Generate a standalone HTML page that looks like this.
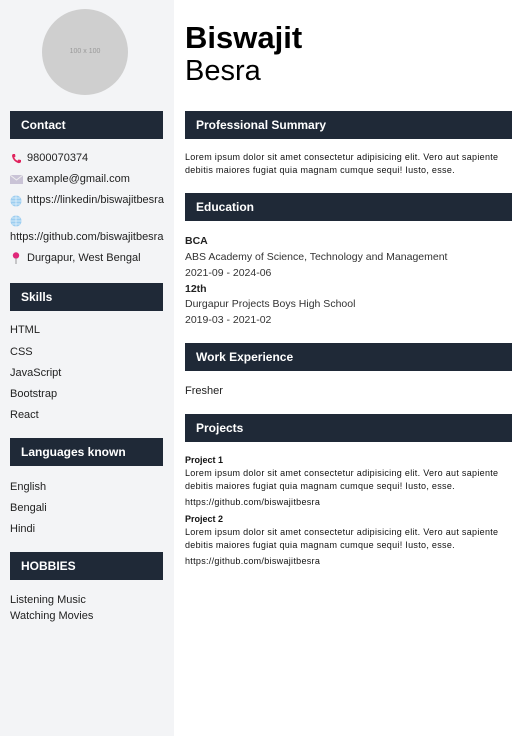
<!DOCTYPE html>
<html><head><meta charset="utf-8"><style>
*{margin:0;padding:0;box-sizing:border-box}
body{width:519px;height:736px;background:#fff;font-family:"Liberation Sans",sans-serif;color:#222;position:relative;overflow:hidden}
.side{position:absolute;left:0;top:0;width:174px;height:736px;background:#f3f4f6}
.t{position:absolute;white-space:nowrap;line-height:1}
.bar{position:absolute;height:28px;background:#1f2937;color:#fff;font-weight:bold;font-size:12px;padding-left:11px;line-height:29px}
.s{font-size:11px;color:#222}
.r{font-size:9px;letter-spacing:0.3px;color:#111}
.e{font-size:10.5px;color:#333}
.ic{position:absolute;font-size:10px;line-height:1}
</style></head><body>
<div class="side"></div>
<div style="position:absolute;left:42px;top:9px;width:86px;height:86px;border-radius:50%;background:#cfcfcf;color:#999;font-size:7px;text-align:center;line-height:86px">100 x 100</div>

<div class="bar" style="left:10px;top:111px;width:153px">Contact</div>
<svg class="ic" style="left:11px;top:153px" width="11" height="11" viewBox="0 0 11 11"><path d="M2 1 L4 1 L4.5 3.5 L3.2 4.5 Q4.5 7 6.5 7.8 L7.5 6.5 L10 7 L10 9 Q9 10.5 7 10 Q2 8 1 3 Q1 1.5 2 1Z" fill="#e0245e"/></svg>
<div class="t s" style="left:27px;top:153px">9800070374</div>
<svg class="ic" style="left:10px;top:175px" width="13" height="9" viewBox="0 0 13 9"><rect width="13" height="9" fill="#c9c3d6"/><path d="M0 0 L6.5 5 L13 0" stroke="#eee" fill="none"/></svg>
<div class="t s" style="left:27px;top:174px">example@gmail.com</div>
<svg class="ic" style="left:10px;top:195px" width="12" height="12" viewBox="0 0 12 12"><circle cx="6" cy="6" r="5.5" fill="#9ccdf0"/><path d="M0.5 6H11.5M6 0.5V11.5M2 3H10M2 9H10" stroke="#e8f4fc" stroke-width="0.7"/></svg>
<div class="t s" style="left:27px;top:195px">https://linkedin/biswajitbesra</div>
<svg class="ic" style="left:10px;top:215px" width="12" height="12" viewBox="0 0 12 12"><circle cx="6" cy="6" r="5.5" fill="#9ccdf0"/><path d="M0.5 6H11.5M6 0.5V11.5M2 3H10M2 9H10" stroke="#e8f4fc" stroke-width="0.7"/></svg>
<div class="t s" style="left:10px;top:232px">https://github.com/biswajitbesra</div>
<svg class="ic" style="left:12px;top:252px" width="8" height="12" viewBox="0 0 8 12"><circle cx="4" cy="3.5" r="3.2" fill="#e0287a"/><path d="M4 6V12" stroke="#999" stroke-width="1"/></svg>
<div class="t s" style="left:27px;top:253px">Durgapur, West Bengal</div>

<div class="bar" style="left:10px;top:283px;width:153px">Skills</div>
<div class="t s" style="left:10px;top:325px">HTML</div>
<div class="t s" style="left:10px;top:347px">CSS</div>
<div class="t s" style="left:10px;top:368px">JavaScript</div>
<div class="t s" style="left:10px;top:389px">Bootstrap</div>
<div class="t s" style="left:10px;top:410px">React</div>

<div class="bar" style="left:10px;top:438px;width:153px">Languages known</div>
<div class="t s" style="left:10px;top:482px">English</div>
<div class="t s" style="left:10px;top:503px">Bengali</div>
<div class="t s" style="left:10px;top:524px">Hindi</div>

<div class="bar" style="left:10px;top:552px;width:153px">HOBBIES</div>
<div class="t s" style="left:10px;top:595px">Listening Music</div>
<div class="t s" style="left:10px;top:611px">Watching Movies</div>

<div class="t" style="left:185px;top:22px;font-size:31px;font-weight:bold;color:#000">Biswajit</div>
<div class="t" style="left:185px;top:57px;font-size:29px;color:#000">Besra</div>

<div class="bar" style="left:185px;top:111px;width:327px">Professional Summary</div>
<div class="t r" style="left:185px;top:153px">Lorem ipsum dolor sit amet consectetur adipisicing elit. Vero aut sapiente</div>
<div class="t r" style="left:185px;top:166px">debitis maiores fugiat quia magnam cumque sequi! Iusto, esse.</div>

<div class="bar" style="left:185px;top:193px;width:327px">Education</div>
<div class="t e" style="left:185px;top:236px;font-weight:bold;color:#222">BCA</div>
<div class="t e" style="left:185px;top:252px">ABS Academy of Science, Technology and Management</div>
<div class="t e" style="left:185px;top:268px">2021-09 - 2024-06</div>
<div class="t e" style="left:185px;top:284px;font-weight:bold;color:#222">12th</div>
<div class="t e" style="left:185px;top:299px">Durgapur Projects Boys High School</div>
<div class="t e" style="left:185px;top:315px">2019-03 - 2021-02</div>

<div class="bar" style="left:185px;top:343px;width:327px">Work Experience</div>
<div class="t s" style="left:185px;top:386px">Fresher</div>

<div class="bar" style="left:185px;top:414px;width:327px">Projects</div>
<div class="t r" style="left:185px;top:456px;font-weight:bold;letter-spacing:0">Project 1</div>
<div class="t r" style="left:185px;top:469px">Lorem ipsum dolor sit amet consectetur adipisicing elit. Vero aut sapiente</div>
<div class="t r" style="left:185px;top:482px">debitis maiores fugiat quia magnam cumque sequi! Iusto, esse.</div>
<div class="t r" style="left:185px;top:498px">https://github.com/biswajitbesra</div>
<div class="t r" style="left:185px;top:515px;font-weight:bold;letter-spacing:0">Project 2</div>
<div class="t r" style="left:185px;top:528px">Lorem ipsum dolor sit amet consectetur adipisicing elit. Vero aut sapiente</div>
<div class="t r" style="left:185px;top:541px">debitis maiores fugiat quia magnam cumque sequi! Iusto, esse.</div>
<div class="t r" style="left:185px;top:557px">https://github.com/biswajitbesra</div>
</body></html>
